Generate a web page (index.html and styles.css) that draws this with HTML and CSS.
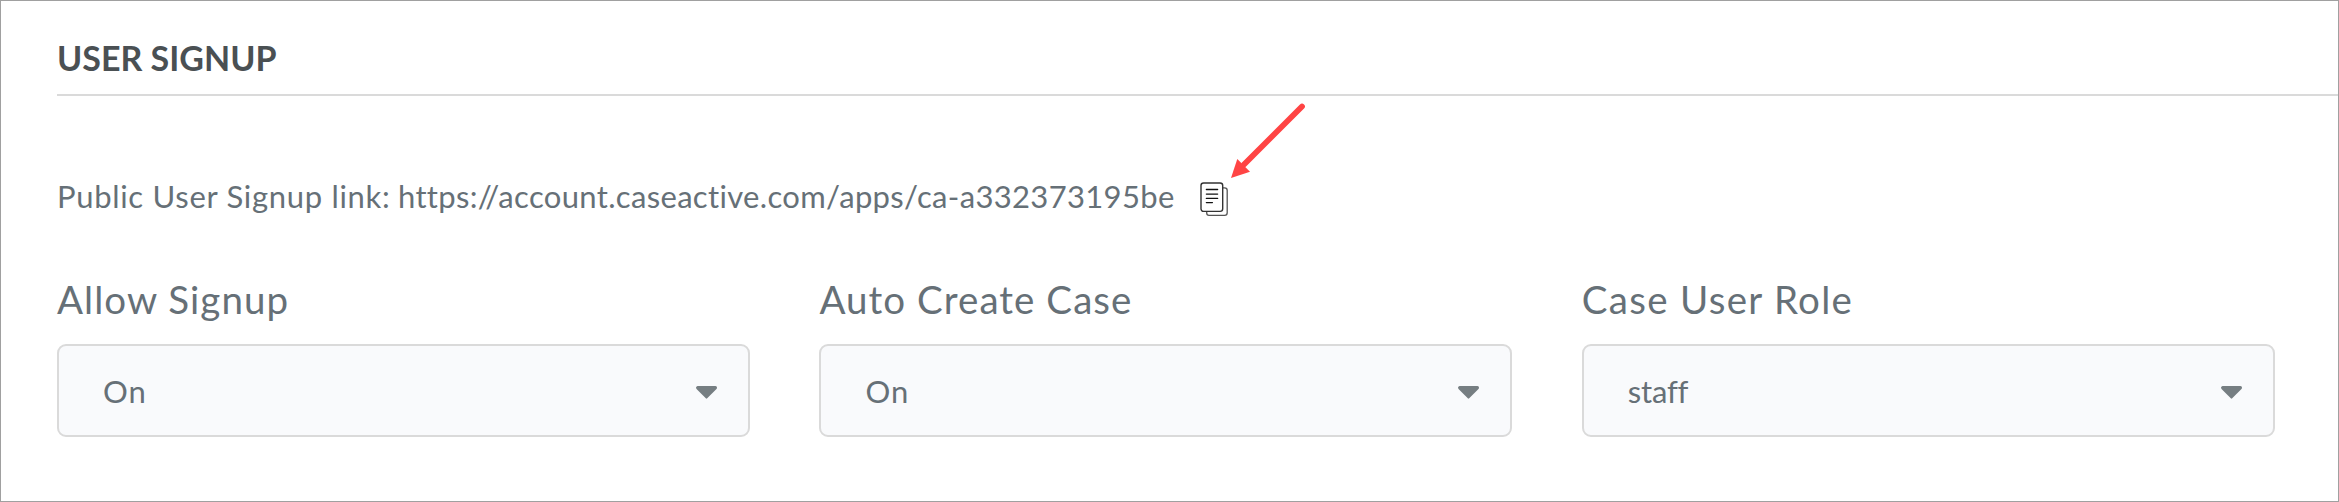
FILE: index.html
```
<!DOCTYPE html>
<html lang="en">
<head>
<meta charset="utf-8">
<title>User Signup</title>
<link rel="stylesheet" href="styles.css">
</head>
<body>
<main class="panel">
  <h1 class="title">USER SIGNUP</h1>
  <div class="link-row">
    <span class="link-label">Public User Signup link:</span>
    <span class="link-url">https://account.caseactive.com/apps/ca-a332373195be</span>
    <svg class="copy-icon" viewBox="0 0 30 36" fill="none" stroke="#333" stroke-width="1.4" stroke-linecap="round" stroke-linejoin="round">
      <path d="M23.2 6.8h1.4q2.6 0 2.6 2.6v22.4q0 2.6-2.6 2.6H9q-2.3 0-2.3-2.4v-1.4" stroke="#555" stroke-width="1.3"/>
      <rect x="1" y="2" width="21.7" height="28.4" rx="2.6"/>
      <path d="M6.4 8.5h11.2M6.4 13.1h11.2M6.4 17.4h11.2M6.4 21.6h6" stroke="#111"/>
    </svg>
    <svg class="pointer" viewBox="0 0 80 80" fill="#ff4444">
      <path d="M72 6.5L14 64.5" stroke="#ff4444" stroke-width="5.8" stroke-linecap="round"/>
      <path d="M1 78L7.3 59L20 71.7Z"/>
    </svg>
  </div>
  <div class="fields">
    <div class="field">
      <span class="label">Allow Signup</span>
      <div class="select"><span class="value">On</span><svg class="caret" viewBox="0 0 21 13"><path d="M1.5 0h18q1.5 0 1.5 1.5t-1 2L11.2 12.3q-.7.7-1.4 0L1 3.5q-1-1-1-2T1.5 0Z"/></svg></div>
    </div>
    <div class="field">
      <span class="label">Auto Create Case</span>
      <div class="select"><span class="value">On</span><svg class="caret" viewBox="0 0 21 13"><path d="M1.5 0h18q1.5 0 1.5 1.5t-1 2L11.2 12.3q-.7.7-1.4 0L1 3.5q-1-1-1-2T1.5 0Z"/></svg></div>
    </div>
    <div class="field">
      <span class="label label-wide">Case User Role</span>
      <div class="select"><span class="value value-long">staff</span><svg class="caret" viewBox="0 0 21 13"><path d="M1.5 0h18q1.5 0 1.5 1.5t-1 2L11.2 12.3q-.7.7-1.4 0L1 3.5q-1-1-1-2T1.5 0Z"/></svg></div>
    </div>
  </div>
</main>
</body>
</html>
```
FILE: styles.css
```
* { box-sizing: border-box; }

body {
  margin: 0;
  background: #fff;
  color: #667077;
  font-family: Lato, sans-serif;
  font-size: 31px;
}

.panel {
  height: 502px;
  padding: 37px 0 0 56px;
  border: 1px solid #a0a0a0;
}

.title {
  margin: 0;
  padding-bottom: 16px;
  border-bottom: 2px solid #dadada;
  color: #4a5053;
  font-size: 34px;
  font-weight: 700;
  line-height: 40px;
}

.link-row {
  position: relative;
  display: flex;
  margin-top: 80px;
  height: 40px;
  line-height: 40px;
  white-space: nowrap;
}

.link-label {
  width: 341px;
  letter-spacing: 0.7px;
}

.link-url {
  width: 802px;
  letter-spacing: 0.33px;
}

.copy-icon {
  width: 30px;
  height: 36px;
  margin-top: 5px;
}

.pointer {
  position: absolute;
  left: 1173px;
  top: -76px;
  width: 80px;
  height: 80px;
}

.fields {
  display: grid;
  grid-template-columns: repeat(3, 693px);
  column-gap: 69.4px;
  margin-top: 61px;
}

.field {
  display: flex;
  flex-direction: column;
  gap: 23px;
}

.label {
  font-size: 38.5px;
  line-height: 44px;
  letter-spacing: 1.05px;
}

.label-wide { letter-spacing: 1.3px; }

.select {
  display: flex;
  align-items: center;
  justify-content: space-between;
  height: 93px;
  padding: 0 31px 0 44px;
  border: 2px solid #dadada;
  border-radius: 9px;
  background: #f9fafc;
}

.value { letter-spacing: 1.1px; }
.value-long { letter-spacing: -0.2px; }

.caret {
  width: 21px;
  height: 13px;
  margin-top: 3px;
  fill: #767e82;
}
```
